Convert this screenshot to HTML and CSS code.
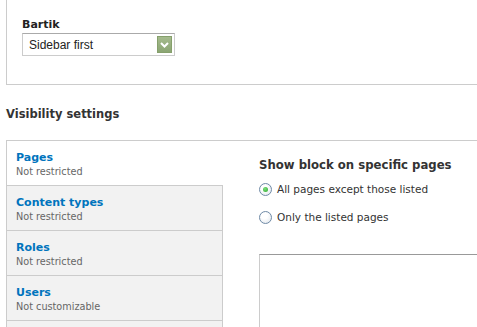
FILE: index.html
```html
<!DOCTYPE html>
<html lang="en">
<head>
    <meta charset="UTF-8">
    <title>Block settings</title>
    <link rel="stylesheet" href="styles.css">
</head>
<body>
    <div class="region-fieldset">
        <label class="field-label" for="region">Bartik</label>
        <div class="select" id="region">
            <span class="select-text">Sidebar first</span>
            <span class="select-btn">
                <svg width="15" height="17" viewBox="0 0 15 17">
                    <path d="M4 7 L7.5 10.5 L11 7" fill="none" stroke="#fff" stroke-width="2"/>
                </svg>
            </span>
        </div>
    </div>

    <h2 class="section-title">Visibility settings</h2>

    <div class="vertical-tabs">
        <ul class="tab-list">
            <li class="tab selected">
                <strong>Pages</strong>
                <span class="summary">Not restricted</span>
            </li>
            <li class="tab">
                <strong>Content types</strong>
                <span class="summary">Not restricted</span>
            </li>
            <li class="tab">
                <strong>Roles</strong>
                <span class="summary">Not restricted</span>
            </li>
            <li class="tab">
                <strong>Users</strong>
                <span class="summary">Not customizable</span>
            </li>
            <li class="tab tab-more"></li>
        </ul>
        <div class="tab-pane">
            <h3 class="pane-title">Show block on specific pages</h3>
            <div class="radios">
                <div class="radio-row">
                    <span class="radio checked"></span>
                    <span class="radio-label">All pages except those listed</span>
                </div>
                <div class="radio-row">
                    <span class="radio"></span>
                    <span class="radio-label">Only the listed pages</span>
                </div>
            </div>
            <div class="textarea"></div>
        </div>
    </div>
</body>
</html>
```

FILE: styles.css
```css
* {
    margin: 0;
    padding: 0;
    box-sizing: border-box;
}

body {
    font-family: "DejaVu Sans", Verdana, sans-serif;
    color: #333;
    background: #fff;
    overflow: hidden;
}

/* Region fieldset */
.region-fieldset {
    margin-left: 6px;
    padding: 18px 0 28px 15px;
    border-left: 1px solid #ccc;
    border-bottom: 1px solid #ccc;
}

.field-label {
    display: block;
    font-size: 11px;
    line-height: 14px;
    font-weight: bold;
    color: #222;
}

.select {
    display: flex;
    align-items: center;
    justify-content: space-between;
    width: 153px;
    height: 23px;
    margin-top: 1px;
    padding: 0 2px 0 6px;
    border: 1px solid #ccc;
    border-top-color: #aaa;
    background: #fff;
}

.select-text {
    font-family: "Liberation Sans", Arial, sans-serif;
    font-size: 12px;
    color: #222;
}

.select-btn {
    display: flex;
    width: 15px;
    height: 17px;
    background: linear-gradient(#a5bb8d, #8ba573);
    border: 1px solid #86a06c;
}

.select-btn svg {
    margin: -1px;
}

/* Visibility */
.section-title {
    margin: 22px 0 18px 6px;
    font-size: 11.5px;
    line-height: 15px;
    font-weight: bold;
    color: #333;
}

.vertical-tabs {
    display: flex;
    margin-left: 6px;
    border-top: 1px solid #ccc;
    border-left: 1px solid #ccc;
}

.tab-list {
    list-style: none;
    width: 216px;
    flex-shrink: 0;
}

.tab {
    height: 45px;
    padding: 9px 0 7px 9px;
    border-top: 1px solid #ccc;
    border-right: 1px solid #ccc;
    background: #f2f2f2;
}

.tab.selected {
    height: 44px;
    border-top: none;
    border-right-color: #fff;
    background: #fff;
}

.tab.tab-more {
    height: 7px;
    padding: 0;
}

.tab strong {
    display: block;
    font-size: 11px;
    line-height: 15px;
    color: #0074bd;
}

.tab .summary {
    display: block;
    font-size: 9.7px;
    line-height: 13px;
    color: #666;
}

.tab-pane {
    flex: 1;
    padding: 17px 0 0 36px;
}

.pane-title {
    font-size: 11.7px;
    line-height: 15px;
    font-weight: bold;
    color: #333;
}

.radios {
    display: flex;
    flex-direction: column;
    gap: 14px;
    margin-top: 9px;
}

.radio-row {
    display: flex;
    align-items: center;
    gap: 5px;
    height: 14px;
}

.radio {
    display: flex;
    align-items: center;
    justify-content: center;
    width: 13px;
    height: 13px;
    border: 1px solid #6f8aa6;
    border-radius: 50%;
    background: radial-gradient(circle at 40% 35%, #fff 30%, #dde3ea 100%);
}

.radio.checked::after {
    content: "";
    width: 5px;
    height: 5px;
    border-radius: 50%;
    background: radial-gradient(circle at 40% 35%, #7de07d, #2aa52a);
}

.radio-label {
    font-size: 10.5px;
    line-height: 14px;
    color: #333;
}

.textarea {
    margin-top: 30px;
    height: 73px;
    border-top: 1px solid #999;
    border-left: 1px solid #ccc;
}
```
